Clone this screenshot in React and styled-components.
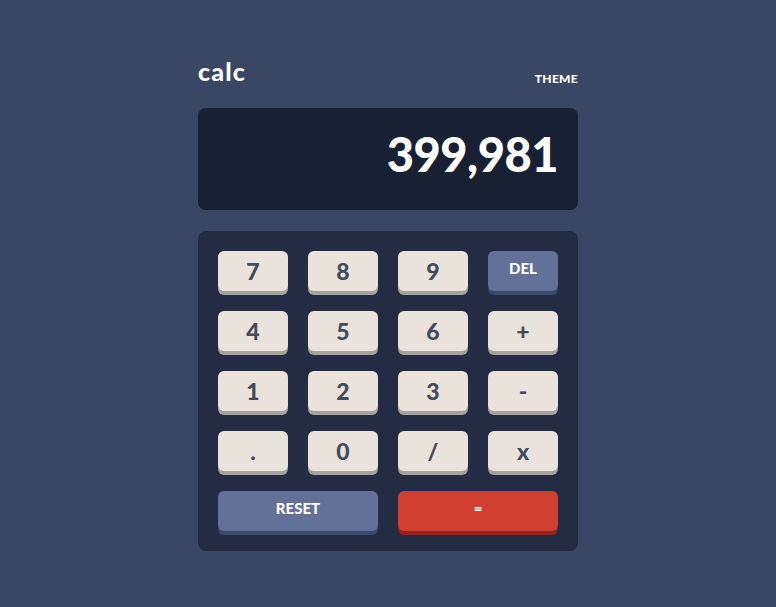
import React from "react";
import styled, { createGlobalStyle } from "styled-components";

const GlobalStyle = createGlobalStyle`
  * { box-sizing: border-box; }
  body {
    margin: 0;
    background: #3a4764;
    font-family: "Lato", "Noto Sans", sans-serif;
  }
`;

const Page = styled.div`
  min-height: 100vh;
  display: flex;
  justify-content: center;
  padding-top: 58px;
`;

const Calculator = styled.main`
  width: 380px;
  display: flex;
  flex-direction: column;
`;

const Header = styled.header`
  display: flex;
  justify-content: space-between;
  align-items: flex-end;
  height: 26px;
  margin-bottom: 24px;
  color: #ffffff;
`;

const Logo = styled.h1`
  margin: 0;
  font-size: 25px;
  font-weight: 900;
  line-height: 1;
  letter-spacing: 1.2px;
`;

const ThemeLabel = styled.span`
  font-size: 12px;
  font-weight: 900;
  letter-spacing: 0.3px;
  line-height: 1;
  margin-bottom: -1px;
`;

const Screen = styled.div`
  height: 102px;
  border-radius: 8px;
  background: #182034;
  color: #ffffff;
  display: flex;
  align-items: center;
  justify-content: flex-end;
  padding: 0 20px 10px;
  font-size: 47px;
  font-weight: 900;
  letter-spacing: -0.5px;
  margin-bottom: 21px;
`;

const Keypad = styled.div`
  background: #232c43;
  border-radius: 8px;
  padding: 20px;
  display: grid;
  grid-template-columns: repeat(4, 70px);
  grid-auto-rows: 40px;
  column-gap: 20px;
  row-gap: 20px;
`;

const variants = {
  light: { bg: "#eae3dc", shadow: "#a6a29d", color: "#444b5a", size: "23px", pad: "0" },
  blue: { bg: "#637097", shadow: "#3d4a70", color: "#ffffff", size: "15px", pad: "5px" },
  red: { bg: "#d03f2f", shadow: "#93261a", color: "#ffffff", size: "15px", pad: "5px" },
};

const Key = styled.button`
  grid-column: span ${(p) => p.$span || 1};
  border: none;
  border-radius: 6px;
  background: ${(p) => variants[p.$variant].bg};
  box-shadow: 0 4px 0 ${(p) => variants[p.$variant].shadow};
  color: ${(p) => variants[p.$variant].color};
  font-family: inherit;
  font-size: ${(p) => variants[p.$variant].size};
  font-weight: 900;
  line-height: 1;
  padding: 0 0 ${(p) => variants[p.$variant].pad};
  cursor: pointer;
`;

const keys = [
  ["7"], ["8"], ["9"], ["DEL", "blue"],
  ["4"], ["5"], ["6"], ["+"],
  ["1"], ["2"], ["3"], ["-"],
  ["."], ["0"], ["/"], ["x"],
  ["RESET", "blue", 2], ["=", "red", 2],
];

export default function App() {
  return (
    <>
      <GlobalStyle />
      <Page>
        <Calculator>
          <Header>
            <Logo>calc</Logo>
            <ThemeLabel>THEME</ThemeLabel>
          </Header>
          <Screen>399,981</Screen>
          <Keypad>
            {keys.map(([label, variant = "light", span]) => (
              <Key key={label} $variant={variant} $span={span}>
                {label}
              </Key>
            ))}
          </Keypad>
        </Calculator>
      </Page>
    </>
  );
}
